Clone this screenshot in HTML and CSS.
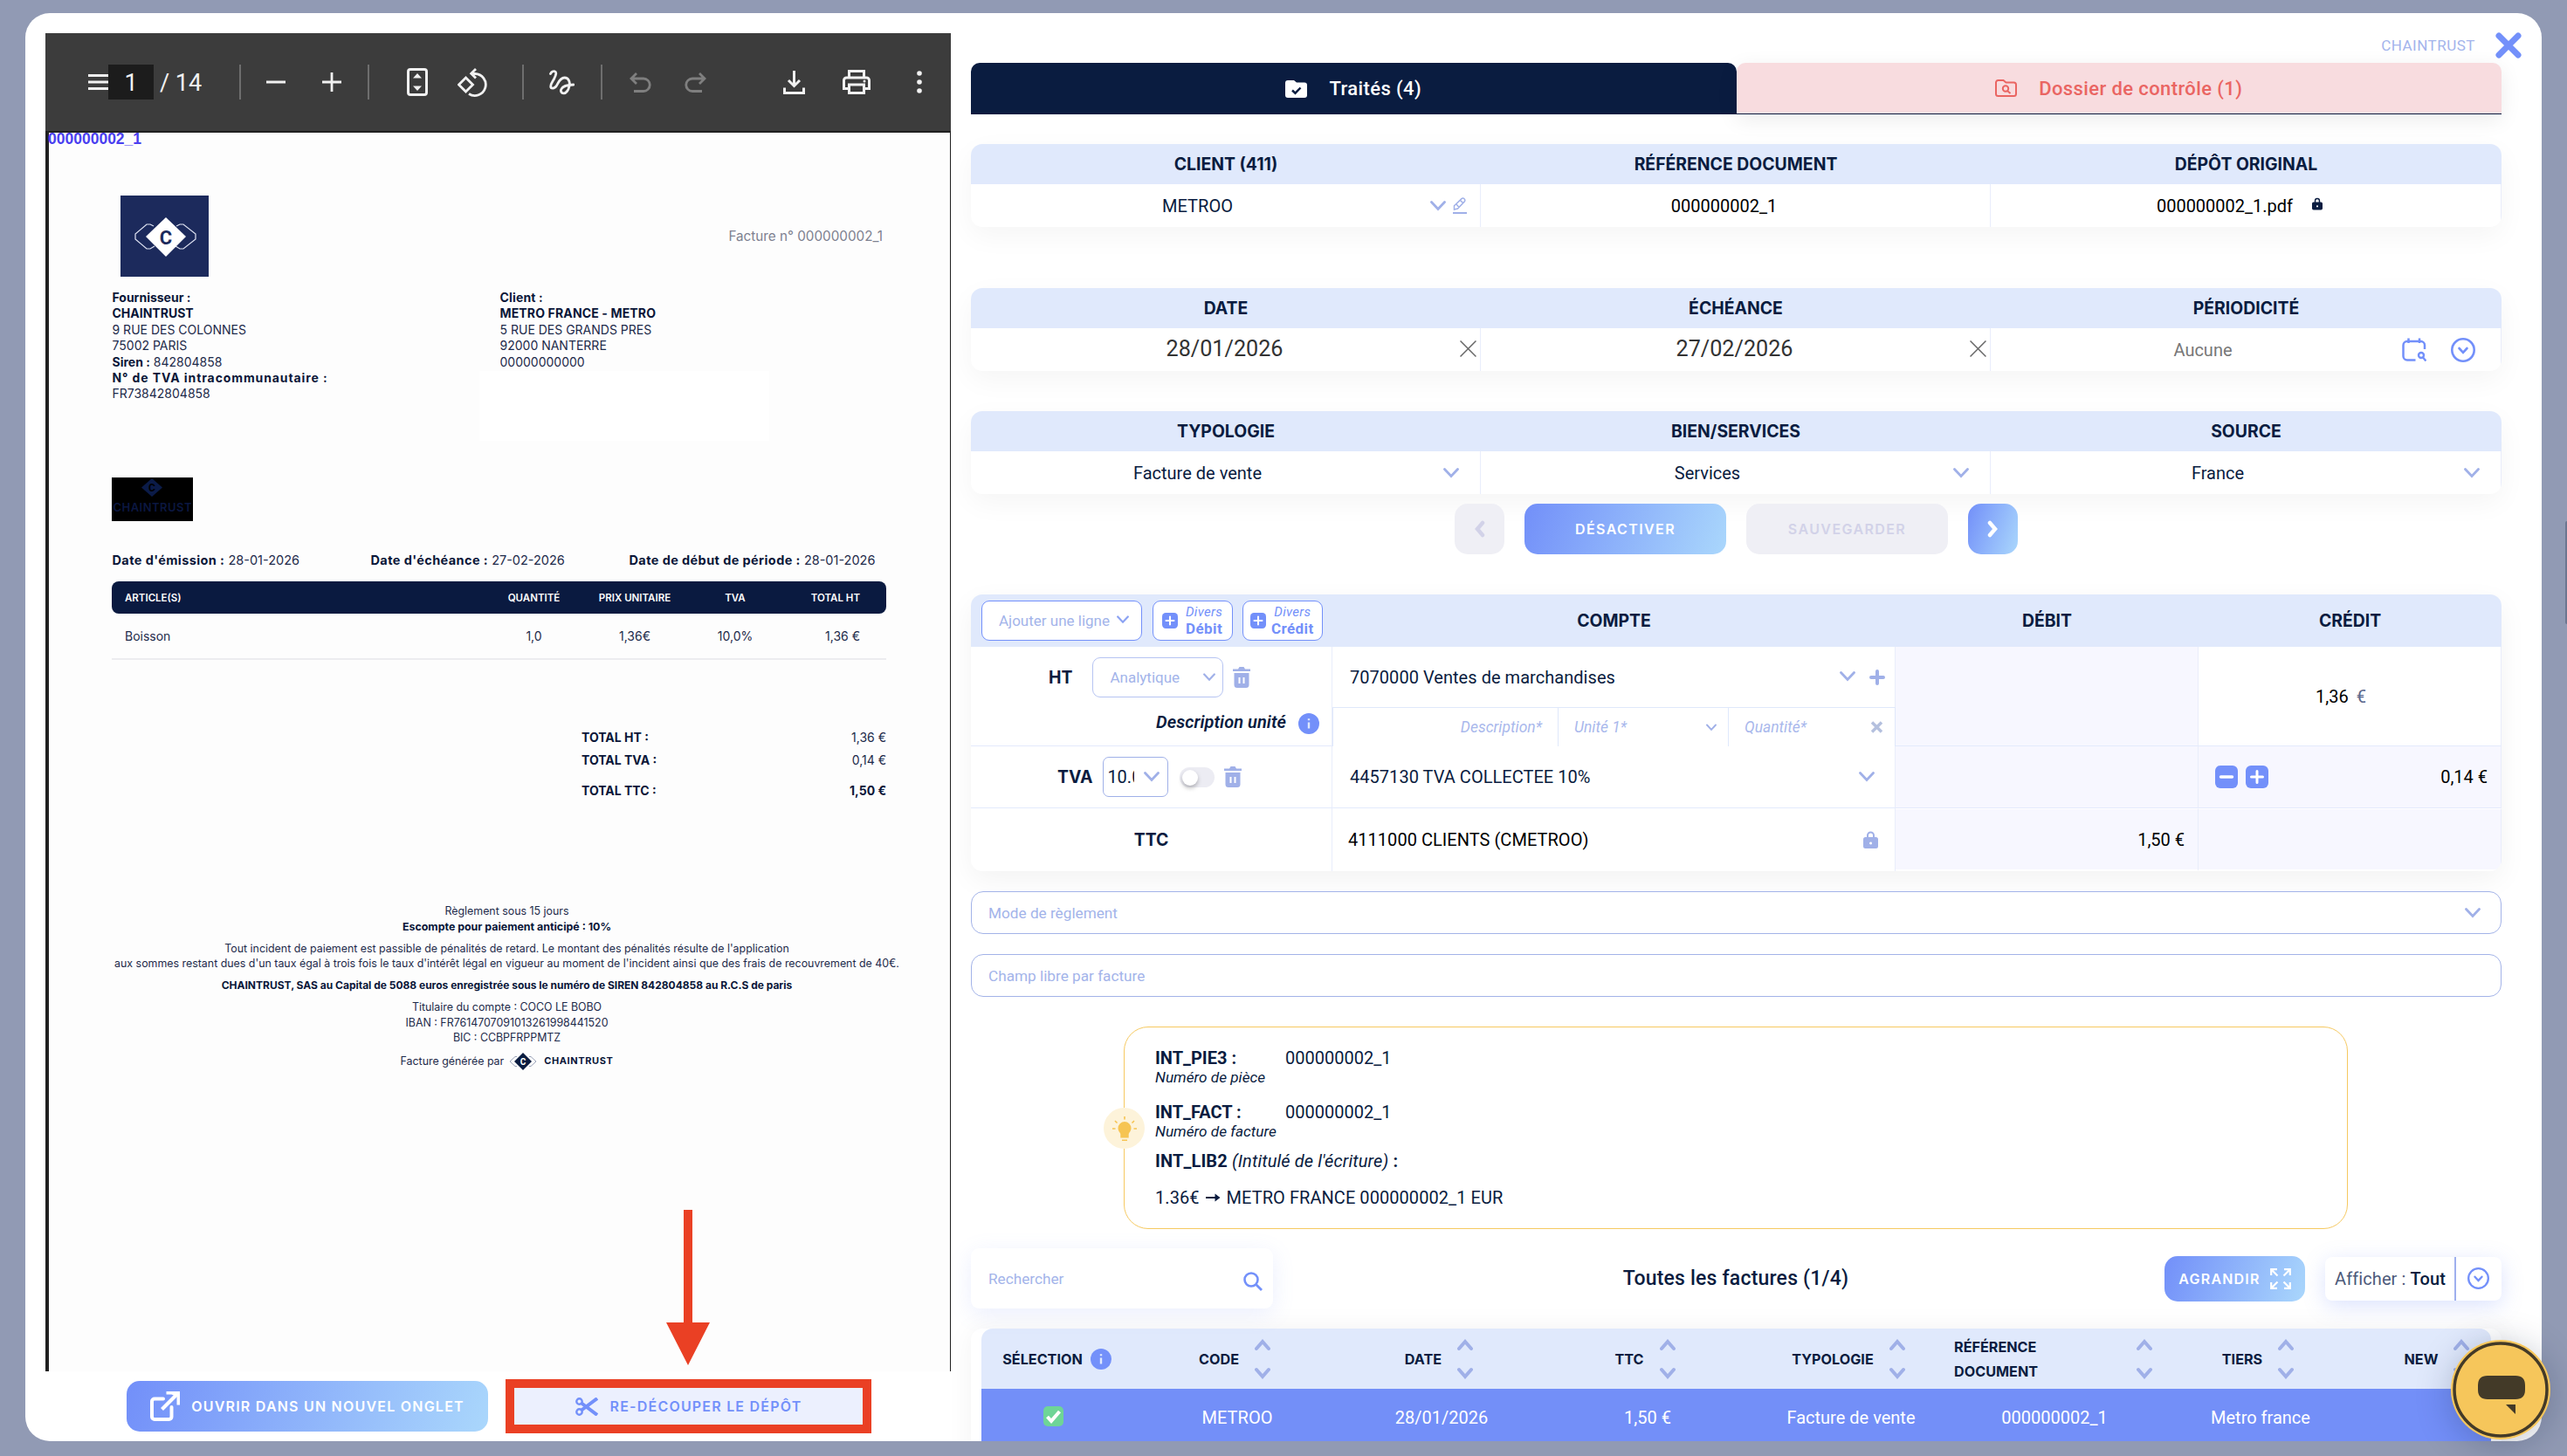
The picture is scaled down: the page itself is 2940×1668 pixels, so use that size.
FILE: index.html
```html
<!DOCTYPE html>
<html lang="fr">
<head>
  <meta charset="UTF-8" />
  <meta name="viewport" content="width=device-width, initial-scale=1.0"/>
  <title>Chaintrust - Factures</title>
  <link rel="stylesheet" href="styles.css">
</head>
<body>

  <!-- Icônes partagées -->
  <svg class="sprite" aria-hidden="true">
    <symbol id="chevron" viewBox="0 0 18 12"><path d="M1.5 1.5 9 9.5l7.5-8" fill="none" stroke="currentColor" stroke-width="2.8" stroke-linecap="round"/></symbol>
    <symbol id="sort" viewBox="0 0 18 46"><path d="M2 11 9 3l7 8M2 35l7 8 7-8" fill="none" stroke="currentColor" stroke-width="4" stroke-linecap="round"/></symbol>
    <symbol id="trash" viewBox="0 0 20 24"><path fill="currentColor" fill-rule="evenodd" d="M0 2.500h6L7.500 0h5L14 2.500h6V5H0zM1.500 7h17v13.500a3.500 3.500 0 0 1-3.500 3.500H5a3.500 3.500 0 0 1-3.500-3.500zM6.500 12v7h2v-7zm5 0v7h2v-7z"/></symbol>
    <symbol id="lock" viewBox="0 0 17 20"><path fill="currentColor" fill-rule="evenodd" d="M4 7V5a4.500 4.500 0 0 1 9 0v2h1.500A2.500 2.500 0 0 1 17 9.500v8a2.500 2.500 0 0 1-2.500 2.500h-12A2.500 2.500 0 0 1 0 17.500v-8A2.500 2.500 0 0 1 2.500 7zm2 0h5V5a2.500 2.500 0 0 0-5 0zm2.500 5.500a1.500 1.500 0 1 0 .01 3 1.500 1.500 0 0 0-.01-3z"/></symbol>
    <symbol id="info" viewBox="0 0 24 24"><circle cx="12" cy="12" r="12" fill="#7390fa"/><path d="M12 10.500v7M12 6.300v2" stroke="#e0e9fc" stroke-width="2.400"/></symbol>
    <symbol id="plus-box" viewBox="0 0 26 26"><rect width="26" height="26" rx="6" fill="#7390fa"/><path d="M13 6.500v13M6.500 13h13" stroke="#fff" stroke-width="3" stroke-linecap="round"/></symbol>
    <symbol id="minus-box" viewBox="0 0 26 26"><rect width="26" height="26" rx="6" fill="#7390fa"/><path d="M6.500 13h13" stroke="#fff" stroke-width="3.500" stroke-linecap="round"/></symbol>
    <symbol id="clear" viewBox="0 0 18 18"><path d="M.5.500l17 17m0-17-17 17" stroke="#666" stroke-width="1.400"/></symbol>
    <symbol id="circle-down" viewBox="0 0 28 28"><circle cx="14" cy="14" r="12.700" fill="none" stroke="#7390fa" stroke-width="2.600"/><path d="m9.500 12 4.500 4.800 4.500-4.800" fill="none" stroke="#7390fa" stroke-width="2.600" stroke-linecap="round"/></symbol>
  </svg>

  <div class="modal">

    <!-- Aperçu du document -->
    <section class="viewer">
      <div class="pdf">
        <div class="toolbar">
          <svg class="menu" viewBox="0 0 23 20"><path d="M0 2.500h23M0 10h23M0 17.500h23" stroke="#f1f1f1" stroke-width="3"/></svg>
          <span class="page-input">1</span>
          <span class="page-total">/ 14</span>
          <i class="sep sep-1"></i>
          <svg class="zoom-out" viewBox="0 0 22 22"><path d="M0 11h22" stroke="#f1f1f1" stroke-width="3"/></svg>
          <svg class="zoom-in" viewBox="0 0 22 22"><path d="M0 11h22M11 0v22" stroke="#f1f1f1" stroke-width="2.800"/></svg>
          <i class="sep sep-2"></i>
          <svg class="fit" viewBox="0 0 24 32"><rect x="1.500" y="1.500" width="21" height="29" rx="2.500" fill="none" stroke="#f1f1f1" stroke-width="3"/><path d="M12 6 17 11.500H7zM12 26 7 20.500h10z" fill="#f1f1f1"/></svg>
          <svg class="rotate" viewBox="0 0 34 33"><path d="M9.500 11 17.500 19l-8 8-8-8z" fill="none" stroke="#f1f1f1" stroke-width="2.800"/><path d="M16 6.500h4a12.500 12.500 0 1 1-7 23M21 1l-5.300 5.300 5.300 5.200" fill="none" stroke="#f1f1f1" stroke-width="2.800"/></svg>
          <i class="sep sep-3"></i>
          <svg class="draw" viewBox="0 0 29 29"><path d="M1.500 4.500C2.500 2 5 1.200 6.300 1.700 8.500 2.500 8.300 5 5.500 10.500 3.500 14 1.700 16 1.700 19c0 2.500 4 3.500 6.800-1 2-3.500 4-9 9-9 5 0 6.500 5 5.500 10-1 4.500-4 8.200-6.500 7.900-2.500-.2-4-2.500-2.500-5C15.500 19 19 17.300 28 17" fill="none" stroke="#f1f1f1" stroke-width="2.800" stroke-linecap="round"/></svg>
          <i class="sep sep-4"></i>
          <svg class="undo" viewBox="0 0 25 23"><path d="M8 1 2 7l6 6M2.500 7H16a7 7 0 0 1 0 14.500H5" fill="none" stroke="#7f7f7f" stroke-width="2.800"/></svg>
          <svg class="redo" viewBox="0 0 25 23"><path d="m17 1 6 6-6 6M22.500 7H9a7 7 0 0 0 0 14.500h11" fill="none" stroke="#7f7f7f" stroke-width="2.800"/></svg>
          <svg class="download" viewBox="0 0 25 27"><path d="M12.500 0v17M6 11l6.500 6.500L19 11M1.500 19.500v6h22v-6" fill="none" stroke="#f1f1f1" stroke-width="3"/></svg>
          <svg class="print" viewBox="0 0 32 28"><path d="M7.500 8V1.500h17V8M7.500 21.500h-6V12a3 3 0 0 1 3-3h23a3 3 0 0 1 3 3v9.500h-6M7.500 17h17v9.500h-17z" fill="none" stroke="#f1f1f1" stroke-width="3"/><circle cx="25" cy="13" r="1.500" fill="#f1f1f1"/></svg>
          <svg class="more" viewBox="0 0 6 26"><circle cx="3" cy="3" r="2.800" fill="#f1f1f1"/><circle cx="3" cy="13" r="2.800" fill="#f1f1f1"/><circle cx="3" cy="23" r="2.800" fill="#f1f1f1"/></svg>
        </div>

        <div class="page">
          <div class="page-tag">000000002_1</div>

          <div class="doc-head">
            <svg class="doc-logo" viewBox="0 0 101 93">
              <rect width="101" height="93" fill="#1c2a5c"/>
              <path d="M38 35 34 33H30L17 44v6L30 61h4l5-3M64 35l4-2h4l14 11v6L72 61h-4l-5-3" fill="none" stroke="#dfe3f2" stroke-width="1.200"/>
              <path d="M52 25 75 47 52 70 29 47z" fill="#fff"/>
              <text x="52" y="55.500" text-anchor="middle" font-family="Roboto" font-weight="700" font-size="22" fill="#1c2a5c">C</text>
            </svg>
            <span class="doc-number">Facture n° 000000002_1</span>
          </div>

          <div class="parties">
            <div class="supplier">
              <b>Fournisseur :</b>
              <b>CHAINTRUST</b>
              <span>9 RUE DES COLONNES</span>
              <span>75002 PARIS</span>
              <span><b>Siren :</b> 842804858</span>
              <b class="vat-label">N° de TVA intracommunautaire :</b>
              <span>FR73842804858</span>
            </div>
            <div class="customer">
              <b>Client :</b>
              <b>METRO FRANCE - METRO</b>
              <span>5 RUE DES GRANDS PRES</span>
              <span>92000 NANTERRE</span>
              <span>00000000000</span>
              <div class="patch"></div>
            </div>
          </div>

          <svg class="stamp" viewBox="0 0 93 50">
            <rect width="93" height="50" fill="#000"/>
            <path d="M46 1 58 11.500 46 22 34 11.500z" fill="#0b1b48"/>
            <text x="46" y="16" text-anchor="middle" font-family="Roboto" font-weight="700" font-size="12" fill="#000">C</text>
            <text x="46.500" y="38.500" text-anchor="middle" textLength="90" font-family="Inter" font-weight="600" font-size="13" fill="#0b1740">CHAINTRUST</text>
          </svg>

          <div class="dates">
            <span><b>Date d'émission :</b> 28-01-2026</span>
            <span><b>Date d'échéance :</b> 27-02-2026</span>
            <span><b>Date de début de période :</b> 28-01-2026</span>
          </div>

          <div class="items items-head">
            <span>ARTICLE(S)</span><span>QUANTITÉ</span><span>PRIX UNITAIRE</span><span>TVA</span><span>TOTAL HT</span>
          </div>
          <div class="items items-row">
            <span>Boisson</span><span>1,0</span><span>1,36€</span><span>10,0%</span><span>1,36 €</span>
          </div>

          <div class="totals">
            <div><b>TOTAL HT :</b><span>1,36 €</span></div>
            <div><b>TOTAL TVA :</b><span>0,14 €</span></div>
            <div class="grand"><b>TOTAL TTC :</b><b>1,50 €</b></div>
          </div>

          <div class="legal">
            <p>Règlement sous 15 jours<br><b>Escompte pour paiement anticipé : 10%</b></p>
            <p>Tout incident de paiement est passible de pénalités de retard. Le montant des pénalités résulte de l'application<br>aux sommes restant dues d'un taux égal à trois fois le taux d'intérêt légal en vigueur au moment de l'incident ainsi que des frais de recouvrement de 40€.</p>
            <p><b class="company">CHAINTRUST, SAS au Capital de 5088 euros enregistrée sous le numéro de SIREN 842804858 au R.C.S de paris</b></p>
            <p>Titulaire du compte : COCO LE BOBO<br>IBAN : FR7614707091013261998441520<br>BIC : CCBPFRPPMTZ</p>
            <div class="brand">
              <span>Facture générée par</span>
              <svg viewBox="0 0 32 20"><path d="M9 4.500H7L1 10l6 5.500h2M23 4.500h2L31 10l-6 5.500h-2" fill="none" stroke="#9aa2b8"/><path d="M16 0 26 10 16 20 6 10z" fill="#0a1c40"/><text x="16" y="13.500" text-anchor="middle" font-family="Roboto" font-weight="700" font-size="10" fill="#fff">C</text></svg>
              <b>CHAINTRUST</b>
            </div>
          </div>
        </div>
      </div>

      <div class="viewer-actions">
        <button class="btn btn-open">
          <svg viewBox="0 0 34 34"><path d="M15 8.500H5A3 3 0 0 0 2 11.500V29a3 3 0 0 0 3 3h16.500a3 3 0 0 0 3-3V18" fill="none" stroke="#fff" stroke-width="4" stroke-linecap="round"/><path d="M13.500 20.500 30 4" stroke="#fff" stroke-width="4"/><path d="M18.500 0H34v15.500h-3.500V6l-6-2.500h-6z" fill="#fff"/></svg>
          Ouvrir dans un nouvel onglet
        </button>
        <button class="btn-split">
          <svg viewBox="0 0 26 21"><path d="M7 14.500 25 1M7 6.500 25 20" stroke="#7390fa" stroke-width="4"/><circle cx="4.500" cy="4.500" r="3.200" fill="none" stroke="#7390fa" stroke-width="2.400"/><circle cx="4.500" cy="16.500" r="3.200" fill="none" stroke="#7390fa" stroke-width="2.400"/></svg>
          Re-découper le dépôt
        </button>
      </div>
      <svg class="arrow" viewBox="0 0 50 178"><path d="M20 0h10v129h20L25 178 0 129h20z" fill="#ea4024"/></svg>
    </section>

    <!-- Saisie comptable -->
    <section class="panel">
      <div class="topbar">
        <span>CHAINTRUST</span>
        <svg viewBox="0 0 30 30"><path d="M4 4l22 22M26 4 4 26" stroke="#7390fa" stroke-width="7" stroke-linecap="round"/></svg>
      </div>

      <div class="tabs">
        <div class="tab tab-done">
          <svg viewBox="0 0 25 20"><path fill="#fff" d="M3 0h7l3 2.500h9a3 3 0 0 1 3 3V17a3 3 0 0 1-3 3H3a3 3 0 0 1-3-3V3a3 3 0 0 1 3-3z"/><path d="m8 11.500 3.500 3.200 6-6.200" fill="none" stroke="#0a1c40" stroke-width="2.500"/></svg>
          Traités (4)
        </div>
        <div class="tab tab-control">
          <svg viewBox="0 0 25 20"><path fill="none" stroke="#ea6562" stroke-width="2" d="M3.500 1h6l3 2.500h9A2.500 2.500 0 0 1 24 6v10.500a2.500 2.500 0 0 1-2.500 2.500h-18A2.500 2.500 0 0 1 1 16.500v-13A2.500 2.500 0 0 1 3.500 1z"/><circle cx="12" cy="10.500" r="3.200" fill="none" stroke="#ea6562" stroke-width="2"/><path d="m14 13 3.500 3" stroke="#ea6562" stroke-width="2"/></svg>
          Dossier de contrôle (1)
        </div>
      </div>

      <div class="card card-client">
        <div class="th">CLIENT (411)</div><div class="th">RÉFÉRENCE DOCUMENT</div><div class="th">DÉPÔT ORIGINAL</div>
        <div class="td select">METROO
          <span class="tools"><svg class="chev"><use href="#chevron"/></svg><svg class="edit" viewBox="0 0 16 19"><path d="M1.500 14V9.800L10 1.600q1.500-1.200 3 .2t.2 3.200L5.500 13zM8.500 3.500l3.500 3.500M4 8l3 3.500" fill="none" stroke="currentColor" stroke-width="1.500"/><path d="M0 18h16" stroke="currentColor" stroke-width="2"/></svg></span>
        </div>
        <div class="td doc-ref">000000002_1</div>
        <div class="td pdf-name">000000002_1.pdf <svg class="lock-sm"><use href="#lock"/></svg></div>
      </div>

      <div class="card card-dates">
        <div class="th">DATE</div><div class="th">ÉCHÉANCE</div><div class="th">PÉRIODICITÉ</div>
        <div class="td date">28/01/2026 <svg><use href="#clear"/></svg></div>
        <div class="td date">27/02/2026 <svg><use href="#clear"/></svg></div>
        <div class="td period">Aucune
          <span class="tools">
            <svg class="calendar" viewBox="0 0 28 27"><path d="M15.500 25.500H6A4.500 4.500 0 0 1 1.500 21V8.500A4.500 4.500 0 0 1 6 4h15.500A4.500 4.500 0 0 1 26 8.500V13M7.500.5V6M20 .500V6" fill="none" stroke="#7390fa" stroke-width="2.500"/><circle cx="22" cy="20" r="3" fill="none" stroke="#7390fa" stroke-width="2.400"/><path d="m24 22.500 3.500 4" stroke="#7390fa" stroke-width="2.400"/></svg>
            <svg class="circle-down"><use href="#circle-down"/></svg>
          </span>
        </div>
      </div>

      <div class="card card-type">
        <div class="th">TYPOLOGIE</div><div class="th">BIEN/SERVICES</div><div class="th">SOURCE</div>
        <div class="td select">Facture de vente <span class="tools"><svg class="chev"><use href="#chevron"/></svg></span></div>
        <div class="td select">Services <span class="tools"><svg class="chev"><use href="#chevron"/></svg></span></div>
        <div class="td select">France <span class="tools"><svg class="chev"><use href="#chevron"/></svg></span></div>
      </div>

      <div class="actions">
        <button class="btn nav-btn off"><svg viewBox="0 0 13 20"><path d="M10 3 4 10l6 7" fill="none" stroke="#d2d2e8" stroke-width="4.500" stroke-linecap="round"/></svg></button>
        <button class="btn">Désactiver</button>
        <button class="btn off">Sauvegarder</button>
        <button class="btn nav-btn"><svg viewBox="0 0 13 20"><path d="m3 3 6 7-6 7" fill="none" stroke="#fff" stroke-width="4.500" stroke-linecap="round"/></svg></button>
      </div>

      <div class="ledger">
        <div class="l-head l-tools">
          <div class="add-line">Ajouter une ligne <svg class="chev-sm"><use href="#chevron"/></svg></div>
          <div class="misc"><svg><use href="#plus-box"/></svg><span><i>Divers</i><b>Débit</b></span></div>
          <div class="misc misc-credit"><svg><use href="#plus-box"/></svg><span><i>Divers</i><b>Crédit</b></span></div>
        </div>
        <div class="l-head">COMPTE</div>
        <div class="l-head">DÉBIT</div>
        <div class="l-head">CRÉDIT</div>

        <div class="l-cell ht-cell">
          <div class="ht-top">
            <b>HT</b>
            <div class="analytic">Analytique <svg class="chev-sm"><use href="#chevron"/></svg></div>
            <svg class="trash"><use href="#trash"/></svg>
          </div>
          <div class="ht-unit"><b>Description unité</b><svg class="info"><use href="#info"/></svg></div>
        </div>
        <div class="l-cell account account-ht">
          <div class="account-top">7070000 Ventes de marchandises
            <svg class="chev"><use href="#chevron"/></svg>
            <svg class="plus" viewBox="0 0 18 18"><path d="M9 2v14M2 9h14" stroke="currentColor" stroke-width="4" stroke-linecap="round"/></svg>
          </div>
          <div class="units">
            <span class="u-desc">Description*</span>
            <span class="u-unit">Unité 1* <svg><use href="#chevron"/></svg></span>
            <span class="u-qty">Quantité* <svg viewBox="0 0 15 14"><path d="m2 1.500 11 11m0-11-11 11" stroke="#b4c0de" stroke-width="3.500"/></svg></span>
          </div>
        </div>
        <div class="l-cell off-cell"></div>
        <div class="l-cell credit-ht">1,36 <em>€</em></div>

        <div class="l-cell tva-cell">
          <b>TVA</b>
          <div class="rate"><span>10.00</span><svg class="chev"><use href="#chevron"/></svg></div>
          <div class="toggle"></div>
          <svg class="trash"><use href="#trash"/></svg>
        </div>
        <div class="l-cell account">4457130 TVA COLLECTEE 10% <svg class="chev"><use href="#chevron"/></svg></div>
        <div class="l-cell off-cell"></div>
        <div class="l-cell off-cell credit-tva">
          <svg><use href="#minus-box"/></svg><svg><use href="#plus-box"/></svg><span>0,14 €</span>
        </div>

        <div class="l-cell ttc-cell"><b>TTC</b></div>
        <div class="l-cell account account-ttc">4111000 CLIENTS (CMETROO) <svg class="lock"><use href="#lock"/></svg></div>
        <div class="l-cell off-cell last amount">1,50 €</div>
        <div class="l-cell off-cell last"></div>
      </div>

      <div class="field">Mode de règlement <svg class="chev"><use href="#chevron"/></svg></div>
      <div class="field">Champ libre par facture</div>

      <div class="hint">
        <div class="bulb">
          <svg viewBox="0 0 28 28"><path d="M14 6a7.500 7.500 0 0 1 7.500 7.500c0 3-2 4.500-2.800 6.500v4.500H9.300V20c-.8-2-2.800-3.500-2.800-6.500A7.500 7.500 0 0 1 14 6z" fill="#f6c452"/><path d="M14 0v3.500M0 14h3.500M24.500 14H28M3 5l2.500 2.500M25 5l-2.500 2.500M11 27.300h6" stroke="#f6c452" stroke-width="1.600"/></svg>
        </div>
        <div class="hint-row"><b>INT_PIE3 :</b><span>000000002_1</span></div>
        <i class="hint-note">Numéro de pièce</i>
        <div class="hint-row second"><b>INT_FACT :</b><span>000000002_1</span></div>
        <i class="hint-note">Numéro de facture</i>
        <div class="hint-lib"><b>INT_LIB2</b> <i>(Intitulé de l'écriture)</i> <b>:</b></div>
        <div class="hint-result">1.36€ <svg viewBox="0 0 17 12"><path d="M0 6h13" stroke="#0a1c40" stroke-width="2"/><path d="M10.500 1.500 16.500 6l-6 4.500z" fill="#0a1c40"/></svg> METRO FRANCE 000000002_1 EUR</div>
      </div>

      <div class="list-bar">
        <div class="search">Rechercher <svg viewBox="0 0 22 22"><circle cx="9" cy="9" r="7.500" fill="none" stroke="#7390fa" stroke-width="2.600"/><path d="m14.500 14.500 6.500 6.500" stroke="#7390fa" stroke-width="2.800"/></svg></div>
        <h2>Toutes les factures (1/4)</h2>
        <button class="btn btn-grow">Agrandir
          <svg viewBox="0 0 24 24"><path d="M1.200 8V1.200H8M1.500 1.500l7 7M16 1.200h6.800V8M22.500 1.500l-7 7M1.200 16v6.800H8M1.500 22.500l7-7M22.800 16v6.800H16M22.500 22.500l-7-7" fill="none" stroke="#fff" stroke-width="2.200"/></svg>
        </button>
        <div class="filter"><span>Afficher : <b>Tout</b></span><i></i><svg><use href="#circle-down"/></svg></div>
      </div>

      <div class="list">
        <div class="list-row list-head">
          <div class="sel">SÉLECTION <svg class="info"><use href="#info"/></svg></div>
          <div>CODE <svg class="sort"><use href="#sort"/></svg></div>
          <div>DATE <svg class="sort"><use href="#sort"/></svg></div>
          <div>TTC <svg class="sort"><use href="#sort"/></svg></div>
          <div>TYPOLOGIE <svg class="sort"><use href="#sort"/></svg></div>
          <div class="ref">RÉFÉRENCE<br>DOCUMENT <svg class="sort"><use href="#sort"/></svg></div>
          <div>TIERS <svg class="sort"><use href="#sort"/></svg></div>
          <div class="new">NEW <svg class="sort"><use href="#sort"/></svg></div>
        </div>
        <div class="list-row list-item">
          <div class="sel"><svg viewBox="0 0 23 23"><rect width="23" height="23" rx="5" fill="#6ed597"/><path d="m4.500 12 4.500 5L18.500 6" fill="none" stroke="#fff" stroke-width="4"/></svg></div>
          <div>METROO</div>
          <div>28/01/2026</div>
          <div>1,50 €</div>
          <div>Facture de vente</div>
          <div>000000002_1</div>
          <div>Metro france</div>
          <div></div>
        </div>
      </div>
    </section>
  </div>

  <div class="page-scroll"></div>

  <!-- Bulle de chat -->
  <div class="chat">
    <svg viewBox="0 0 114 114"><circle cx="57" cy="57" r="57" fill="#f6c65b"/><circle cx="57" cy="57" r="53" fill="none" stroke="#433a28" stroke-width="3.500"/><path d="M42 41h32q11 0 11 11v5q0 11-11 11H42Q31 68 31 57v-5q0-11 11-11zM63 74h11v11z" fill="#433a28"/></svg>
  </div>

</body>
</html>
```
FILE: styles.css
```css
* {
  box-sizing: border-box;
}

body {
  margin: 0;
  width: 2940px;
  height: 1668px;
  padding: 15px 29px 17px;
  overflow: hidden;
  font-family: Roboto, sans-serif;
  font-size: 20px;
  color: #0a1c40;
  background-color: #919ab4;
}

svg {
  display: block;
  flex: none;
}

.sprite {
  position: absolute;
  width: 0;
  height: 0;
}

.modal {
  display: flex;
  width: 2882px;
  height: 1636px;
  background-color: #fff;
  border-radius: 28px;
  overflow: hidden;
}

/* ---- Aperçu ---- */
.viewer {
  width: 1037px;
  margin: 23px 23px 0 23px;
  flex: none;
  position: relative;
}

.pdf {
  height: 1533px;
  background-color: #202020;
  overflow: hidden;
}

.toolbar {
  display: flex;
  align-items: center;
  height: 112px;
  padding-left: 49px;
  background-color: #3c3c3c;
  color: #f1f1f1;
  font-size: 27px;
}

.menu { width: 23px; height: 20px; }

.page-input {
  width: 52px;
  height: 40px;
  line-height: 42px;
  text-align: center;
  background-color: #1c1c1c;
}

.page-total { width: 54px; padding: 2px 0 0 7px; white-space: nowrap; }

.sep { width: 2px; height: 40px; background-color: #6e6e6e; }
.sep-1 { margin-left: 44px; }
.sep-2 { margin-left: 30px; }
.sep-3 { margin-left: 40px; }
.sep-4 { margin-left: 30px; }

.zoom-out { width: 22px; height: 22px; margin-left: 29px; }
.zoom-in { width: 22px; height: 22px; margin-left: 42px; }
.fit { width: 24px; height: 32px; margin-left: 43px; }
.rotate { width: 34px; height: 33px; margin-left: 34px; }
.draw { width: 29px; height: 29px; margin-left: 29px; }
.undo { width: 25px; height: 23px; margin-left: 31px; }
.redo { width: 25px; height: 23px; margin-left: 38px; }
.download { width: 25px; height: 27px; margin-left: 88px; }
.print { width: 32px; height: 28px; margin-left: 43px; }
.more { width: 6px; height: 26px; margin-left: 53px; }

.page {
  height: 1419px;
  margin: 2px 1px 0 4px;
  background-color: #fdfdfd;
  font-family: Inter, sans-serif;
  font-size: 14px;
  color: #1d2a4a;
}

.page b { color: #0a1638; }

.page-tag {
  height: 18px;
  margin-left: -1px;
  line-height: 14px;
  font-family: "Liberation Sans", sans-serif;
  font-weight: bold;
  font-size: 17.500px;
  color: #4a3ff0;
}

.doc-head {
  display: flex;
  justify-content: space-between;
  align-items: center;
  height: 93px;
  margin: 54px 77px 0 82px;
}

.doc-logo { width: 101px; height: 93px; }

.doc-number { font-size: 15.250px; color: #7d8190; }

.parties {
  display: flex;
  height: 173px;
  margin: 15px 0 0 72.500px;
  line-height: 18.400px;
}

.supplier,
.customer {
  display: flex;
  flex-direction: column;
}

.supplier { width: 444px; }
.vat-label { letter-spacing: .900px; }
.customer b { letter-spacing: .150px; }

.patch {
  width: 332px;
  height: 80px;
  margin: 1px 0 0 -24px;
  background-color: #fff;
}

.stamp { width: 93px; height: 50px; margin: 42px 0 0 72px; }

.dates {
  display: grid;
  grid-template-columns: 296px 296px 1fr;
  height: 20px;
  line-height: 20px;
  margin: 35px 0 0 72.500px;
  font-size: 14.500px;
  white-space: nowrap;
}

.dates b { letter-spacing: .400px; }

.items {
  display: grid;
  grid-template-columns: 411px 115px 116px 114px 86px;
  align-items: center;
  margin-left: 72px;
  width: 887px;
  padding-left: 15px;
  text-align: center;
  white-space: nowrap;
}

.items span:first-child { text-align: left; }
.items span:last-child { text-align: right; }

.items-head {
  height: 37px;
  margin-top: 14px;
  border-radius: 8px;
  background-color: #0a1a40;
  color: #fff;
  font-size: 11.500px;
  font-weight: 600;
}

.items-row { height: 53px; border-bottom: 2px solid #ececef; }

.totals {
  width: 349px;
  margin: 79px 0 0 610px;
  line-height: 20px;
}

.totals div {
  display: flex;
  justify-content: space-between;
  margin-bottom: 6px;
}

.totals .grand { margin: 15px 0 0; }

.legal {
  margin-top: 119px;
  padding-left: 17px;
  text-align: center;
  font-size: 12.400px;
  line-height: 17.500px;
  white-space: nowrap;
}

.legal p { margin: 0 0 7.500px; }
.legal .company { font-size: 12px; }

.brand {
  display: flex;
  justify-content: center;
  align-items: center;
  height: 32px;
  margin-top: -5.500px;
}

.brand svg { width: 32px; height: 20px; margin: 0 8px 0 6px; }
.brand b { font-size: 11px; letter-spacing: .6px; }

.viewer-actions {
  display: flex;
  align-items: center;
  height: 62px;
  margin: 9px 0 0 93px;
}

/* ---- Boutons ---- */
.btn {
  display: flex;
  align-items: center;
  justify-content: center;
  width: 231px;
  height: 58px;
  padding: 0;
  border: none;
  border-radius: 15px;
  background: linear-gradient(110deg, #728ff9, #aad7fc);
  color: #fff;
  font-family: Inter, sans-serif;
  font-size: 16px;
  font-weight: 600;
  letter-spacing: 1.400px;
  text-transform: uppercase;
  white-space: nowrap;
}

.btn.off { background: #efeff5; color: #d2d2e8; }

.btn-open { width: 414px; letter-spacing: 1.220px; }
.btn-open svg { width: 34px; height: 34px; margin-right: 13px; }

.btn-split {
  display: flex;
  align-items: center;
  justify-content: center;
  width: 419px;
  height: 62px;
  margin-left: 20px;
  padding: 0;
  border: 10px solid #ea4024;
  background-color: #ecf0fe;
  color: #7390fa;
  font-family: Inter, sans-serif;
  font-size: 16px;
  font-weight: 600;
  letter-spacing: 1.200px;
  text-transform: uppercase;
}

.btn-split svg { width: 26px; height: 21px; margin-right: 14px; }

.arrow {
  position: absolute;
  left: 711px;
  top: 1348px;
  width: 50px;
  height: 178px;
}

/* ---- Panneau ---- */
.panel { width: 1753px; flex: none; }

.topbar {
  display: flex;
  align-items: center;
  justify-content: flex-end;
  height: 57px;
  margin-right: -23px;
  padding-top: 17px;
  color: #a3b4ec;
  font-size: 17px;
  letter-spacing: .500px;
}

.topbar svg { width: 30px; height: 30px; margin-left: 23px; }

.tabs { display: flex; }

.tab {
  display: flex;
  flex: 1;
  align-items: center;
  justify-content: center;
  height: 59px;
  border-radius: 10px 10px 0 0;
  font-size: 22px;
  font-weight: 500;
  letter-spacing: .400px;
}

.tab svg { width: 25px; height: 20px; margin-right: 25px; }

.tab-done { background-color: #0a1c40; color: #fff; }

.tab-control {
  background-color: #f8dcdf;
  color: #ea6562;
  border-bottom: 1px solid #0a1c40;
  border-radius: 10px 10px 0 0;
  box-shadow: 0 6px 24px rgba(0, 0, 0, .08);
}

.card {
  display: grid;
  grid-template-columns: 584px 584px 585px;
  grid-template-rows: 46px 49px;
  border-radius: 13px;
  background-color: #fff;
  box-shadow: 0 10px 32px rgba(0, 0, 0, .045);
  overflow: hidden;
}

.card-client { margin-top: 34px; }
.card-dates { margin-top: 70px; }
.card-type { margin-top: 46px; }

.th,
.td {
  display: flex;
  align-items: center;
  justify-content: center;
}

.th,
.l-head {
  background-color: #e0e9fc;
  font-family: Inter, sans-serif;
  font-size: 19.400px;
  font-weight: 700;
}

.td { position: relative; border-right: 1px solid #e9edfb; }

.select { padding-right: 64px; }

.tools {
  position: absolute;
  right: 24px;
  display: flex;
  align-items: center;
  color: #a0b0e8;
}

.card-client .tools { right: 15px; }

.chev { width: 18px; height: 12px; color: #a0b0e8; }

.edit { width: 16px; height: 19px; margin-left: 8px; }

.doc-ref { padding-right: 26px; color: #000; }
.pdf-name { padding-right: 14px; color: #000; }
.lock-sm { width: 12px; height: 15px; margin: -4px 0 0 22px; color: #0a1c40; }

.date { font-size: 25.200px; color: #333; padding: 0 2px 3px 0; }
.date svg { position: absolute; right: 4px; width: 19px; height: 19px; }

.period { color: #777; padding-right: 98px; }
.period .tools { right: 29px; }

.calendar { width: 28px; height: 27px; margin-right: 28px; }
.circle-down { width: 28px; height: 28px; }

.actions {
  display: flex;
  gap: 23px;
  margin: 11px 0 46px 554px;
}

.actions .nav-btn { width: 57px; }
.nav-btn svg { width: 13px; height: 20px; }

/* ---- Écritures ---- */
.ledger {
  display: grid;
  grid-template-columns: 414px 645px 347px 347px;
  grid-template-rows: 60px 114px 71px 72px;
  border-radius: 13px;
  background-color: #fff;
  box-shadow: 0 10px 32px rgba(0, 0, 0, .05);
  overflow: hidden;
}

.l-head {
  display: flex;
  align-items: center;
  justify-content: center;
}

.l-tools {
  justify-content: flex-start;
  gap: 12px;
  padding-left: 12px;
  font-family: Roboto, sans-serif;
  font-weight: 400;
}

.add-line,
.misc,
.analytic {
  display: flex;
  align-items: center;
  height: 46px;
  border: 1.500px solid #7390fa;
  border-radius: 9px;
  background-color: #fff;
}

.add-line {
  width: 184px;
  padding-left: 19px;
  font-size: 17px;
  color: #a3b4ea;
  white-space: nowrap;
}

.chev-sm { width: 14px; height: 10px; margin-left: 8px; color: #a0b0e8; }
.add-line .chev-sm { color: #8ba2f3; margin-bottom: 2px; }

.misc {
  width: 92px;
  padding-left: 10px;
  color: #7390fa;
}

.misc + .misc { margin-left: -1px; }
.misc svg { width: 18px; height: 18px; }
.misc span {
  display: flex;
  flex-direction: column;
  align-items: center;
  margin-left: 9px;
  line-height: 19px;
}
.misc i { font-size: 15px; letter-spacing: .300px; }
.misc b { font-size: 17px; font-weight: 700; letter-spacing: .400px; }
.misc-credit { padding-left: 8px; }
.misc-credit span { margin-left: 6px; }

.l-cell {
  display: flex;
  align-items: center;
  border-right: 1px solid #e9edfb;
  border-bottom: 1px solid #e3eafc;
  white-space: nowrap;
}

.l-cell > b,
.ht-top b {
  font-family: Inter, sans-serif;
  font-size: 19.400px;
  font-weight: 700;
}

.ht-cell { flex-direction: column; align-items: stretch; }

.ht-top {
  display: flex;
  align-items: center;
  height: 69px;
  padding: 1px 0 0 89px;
}

.analytic {
  width: 150px;
  margin-left: 23px;
  padding-left: 19px;
  border-color: #b6c4f2;
  font-size: 17px;
  color: #a3b4ea;
}

.analytic .chev-sm { margin-left: 27px; }

.trash { width: 20px; height: 24px; color: #a0b0e8; margin-left: 11px; }

.ht-unit {
  display: flex;
  align-items: center;
  justify-content: flex-end;
  padding: 5px 14px 0 0;
  font-style: italic;
}

.ht-unit b { font-weight: 600; margin-bottom: 3px; letter-spacing: .050px; }

.info { width: 24px; height: 24px; margin-left: 14px; }

.account { padding: 0 23px 0 20px; letter-spacing: .040px; }
.account .chev,
.account .lock { margin-left: auto; }
.lock { width: 17px; height: 20px; color: #a0b0e8; }

.account-ht {
  flex-direction: column;
  align-items: stretch;
  padding: 0;
  border: none;
}

.account-top {
  display: flex;
  align-items: center;
  height: 69px;
  padding: 1px 11px 0 20px;
  border-right: 1px solid #e9edfb;
}

.account-top .plus { width: 18px; height: 18px; margin-left: 16px; color: #a0b0e8; }
.account-top .chev { margin-bottom: 3px; }

.units {
  display: grid;
  grid-template-columns: 258px 195px 1fr;
  height: 45px;
  border: 1.500px solid #dfe8fb;
  border-bottom: none;
  font-size: 17.400px;
  font-style: italic;
  color: #a9b8ec;
}

.units span {
  display: flex;
  align-items: center;
  justify-content: space-between;
  padding: 0 13px 0 18px;
  border-right: 1px solid #dfe8fb;
}

.units .u-desc { justify-content: flex-end; padding-right: 18px; }
.units .u-qty { border: none; padding-right: 13px; }
.u-unit svg { width: 12px; height: 9px; color: #a0b0e8; }
.u-qty svg { width: 15px; height: 14px; }

.off-cell { background-color: #f7f7ff; }
.last { border-bottom: 2px solid #fff; border-top: 1px solid #fff; }

.credit-ht { justify-content: center; color: #000; padding-right: 20px; }
.credit-ht em { font-style: normal; color: #5b688d; margin-left: 9px; }

.tva-cell { padding-left: 99px; }

.rate {
  display: flex;
  align-items: center;
  width: 75px;
  height: 46px;
  margin-left: 12px;
  padding-left: 4px;
  border: 1.500px solid #9fb0e8;
  border-radius: 7px;
}

.rate span { width: 31px; overflow: hidden; }
.rate .chev { margin-left: 11px; }

.toggle {
  width: 40px;
  height: 23px;
  margin-left: 13px;
  border-radius: 12px;
  background-color: #ececf3;
}

.toggle::before {
  content: "";
  display: block;
  width: 18px;
  height: 18px;
  margin: 3px;
  border-radius: 50%;
  background-color: #fff;
  box-shadow: 0 3px 5px rgba(0, 0, 0, .25);
}

.credit-tva { color: #000; padding: 0 15px 0 19px; }
.credit-tva svg { width: 26px; height: 26px; margin-right: 9px; }
.credit-tva span { margin-left: auto; }

.ttc-cell { justify-content: center; border-bottom: none; padding-bottom: 1px; }
.account-ttc { color: #000; padding: 0 19px 1px 18px; border-bottom: none; }
.amount { justify-content: flex-end; padding-right: 15px; color: #000; }

.field {
  display: flex;
  align-items: center;
  justify-content: space-between;
  height: 49px;
  margin-top: 23px;
  padding: 0 23px 0 19px;
  border: 1.500px solid #a3b3e8;
  border-radius: 14px;
  background-color: #fff;
  font-size: 17.200px;
  color: #a3b4ea;
}

/* ---- Indications ---- */
.hint {
  position: relative;
  width: 1402px;
  height: 232px;
  margin: 34px 0 0 175px;
  padding: 23px 0 0 35px;
  border: 1px solid #f6c960;
  border-radius: 28px;
}

.bulb {
  position: absolute;
  left: -24px;
  top: 92px;
  display: flex;
  align-items: center;
  justify-content: center;
  width: 47px;
  height: 47px;
  border-radius: 50%;
  background-color: #fdf3da;
}

.bulb svg { width: 28px; height: 28px; }

.hint b { font-weight: 700; }

.hint-row { display: flex; height: 24px; line-height: 24px; }
.hint-row b { width: 149px; }
.hint-row.second { margin-top: 17px; }

.hint-note {
  display: block;
  height: 21px;
  line-height: 20px;
  font-size: 17.200px;
}

.hint-lib { height: 24px; line-height: 24px; margin-top: 11px; letter-spacing: .120px; }

.hint-result {
  display: flex;
  align-items: center;
  height: 24px;
  margin-top: 18px;
  letter-spacing: .060px;
}

.hint-result svg { width: 17px; height: 12px; margin: 0 7px; }

/* ---- Liste des factures ---- */
.list-bar {
  display: flex;
  align-items: center;
  height: 69px;
  margin-top: 22px;
}

.search {
  display: flex;
  align-items: center;
  justify-content: space-between;
  width: 346px;
  height: 69px;
  padding: 0 12px 0 20px;
  border-radius: 9px;
  font-size: 17.200px;
  color: #a3b4ea;
  box-shadow: 0 6px 26px rgba(115, 144, 250, .14);
}

.search svg { width: 22px; height: 22px; margin-top: 6px; }

.list-bar h2 {
  margin: 0 auto;
  padding-left: 39px;
  font-size: 23px;
  font-weight: 500;
  letter-spacing: .200px;
}

.btn-grow { width: 161px; height: 52px; margin-right: 23px; letter-spacing: 1.200px; }
.btn-grow svg { width: 24px; height: 24px; margin-left: 11px; }

.filter {
  display: flex;
  align-items: center;
  width: 202px;
  height: 50px;
  padding-left: 11px;
  border-radius: 8px;
  color: #4d5a7a;
  box-shadow: 0 6px 24px rgba(115, 144, 250, .25);
  white-space: nowrap;
}

.filter b { color: #0a1c40; font-weight: 500; }
.filter span { width: 137px; letter-spacing: .100px; }
.filter i { width: 2px; height: 50px; background-color: #9fb0ee; }
.filter svg { width: 25px; height: 25px; margin-left: 13px; }

.list {
  height: 160px;
  margin-top: 23px;
  padding: 0 12px;
  border-radius: 13px;
  background-color: #fff;
  box-shadow: 0 0 32px rgba(0, 0, 0, .05);
}

.list-row {
  display: grid;
  grid-template-columns: 177px 232px 236px 236px 230px 236px 236px 146px;
}

.list-row > div {
  display: flex;
  align-items: center;
  justify-content: center;
}

.list-head {
  height: 69px;
  border-radius: 13px 13px 0 0;
  background-color: #e0e9fc;
  font-family: Inter, sans-serif;
  font-size: 16.200px;
  font-weight: 700;
}

.list-head > div { padding: 1px 6px 0 0; }
.list-row .sel { padding-right: 13px; }
.list-head .sel { padding-right: 4px; }
.list-head .info { margin-left: 9px; }

.sort { width: 18px; height: 46px; margin-left: 18px; color: #a0b0e8; }

.list-head .ref {
  justify-content: space-between;
  padding-left: 3px;
  line-height: 28px;
}

.list-head .new { padding-left: 22px; padding-right: 0; }

.list-item { height: 70px; padding-bottom: 5px; background-color: #738ff8; color: #fff; }
.list-item svg { width: 23px; height: 23px; margin-top: -3px; }

.page-scroll {
  position: absolute;
  right: 0;
  top: 597px;
  width: 2px;
  height: 118px;
  border-radius: 2px 0 0 2px;
  background-color: #6b7690;
}

.chat {
  position: absolute;
  left: 2807px;
  top: 1535px;
  width: 114px;
  height: 114px;
  border-radius: 50%;
  box-shadow: 0 6px 40px rgba(10, 28, 64, .25);
}
```
